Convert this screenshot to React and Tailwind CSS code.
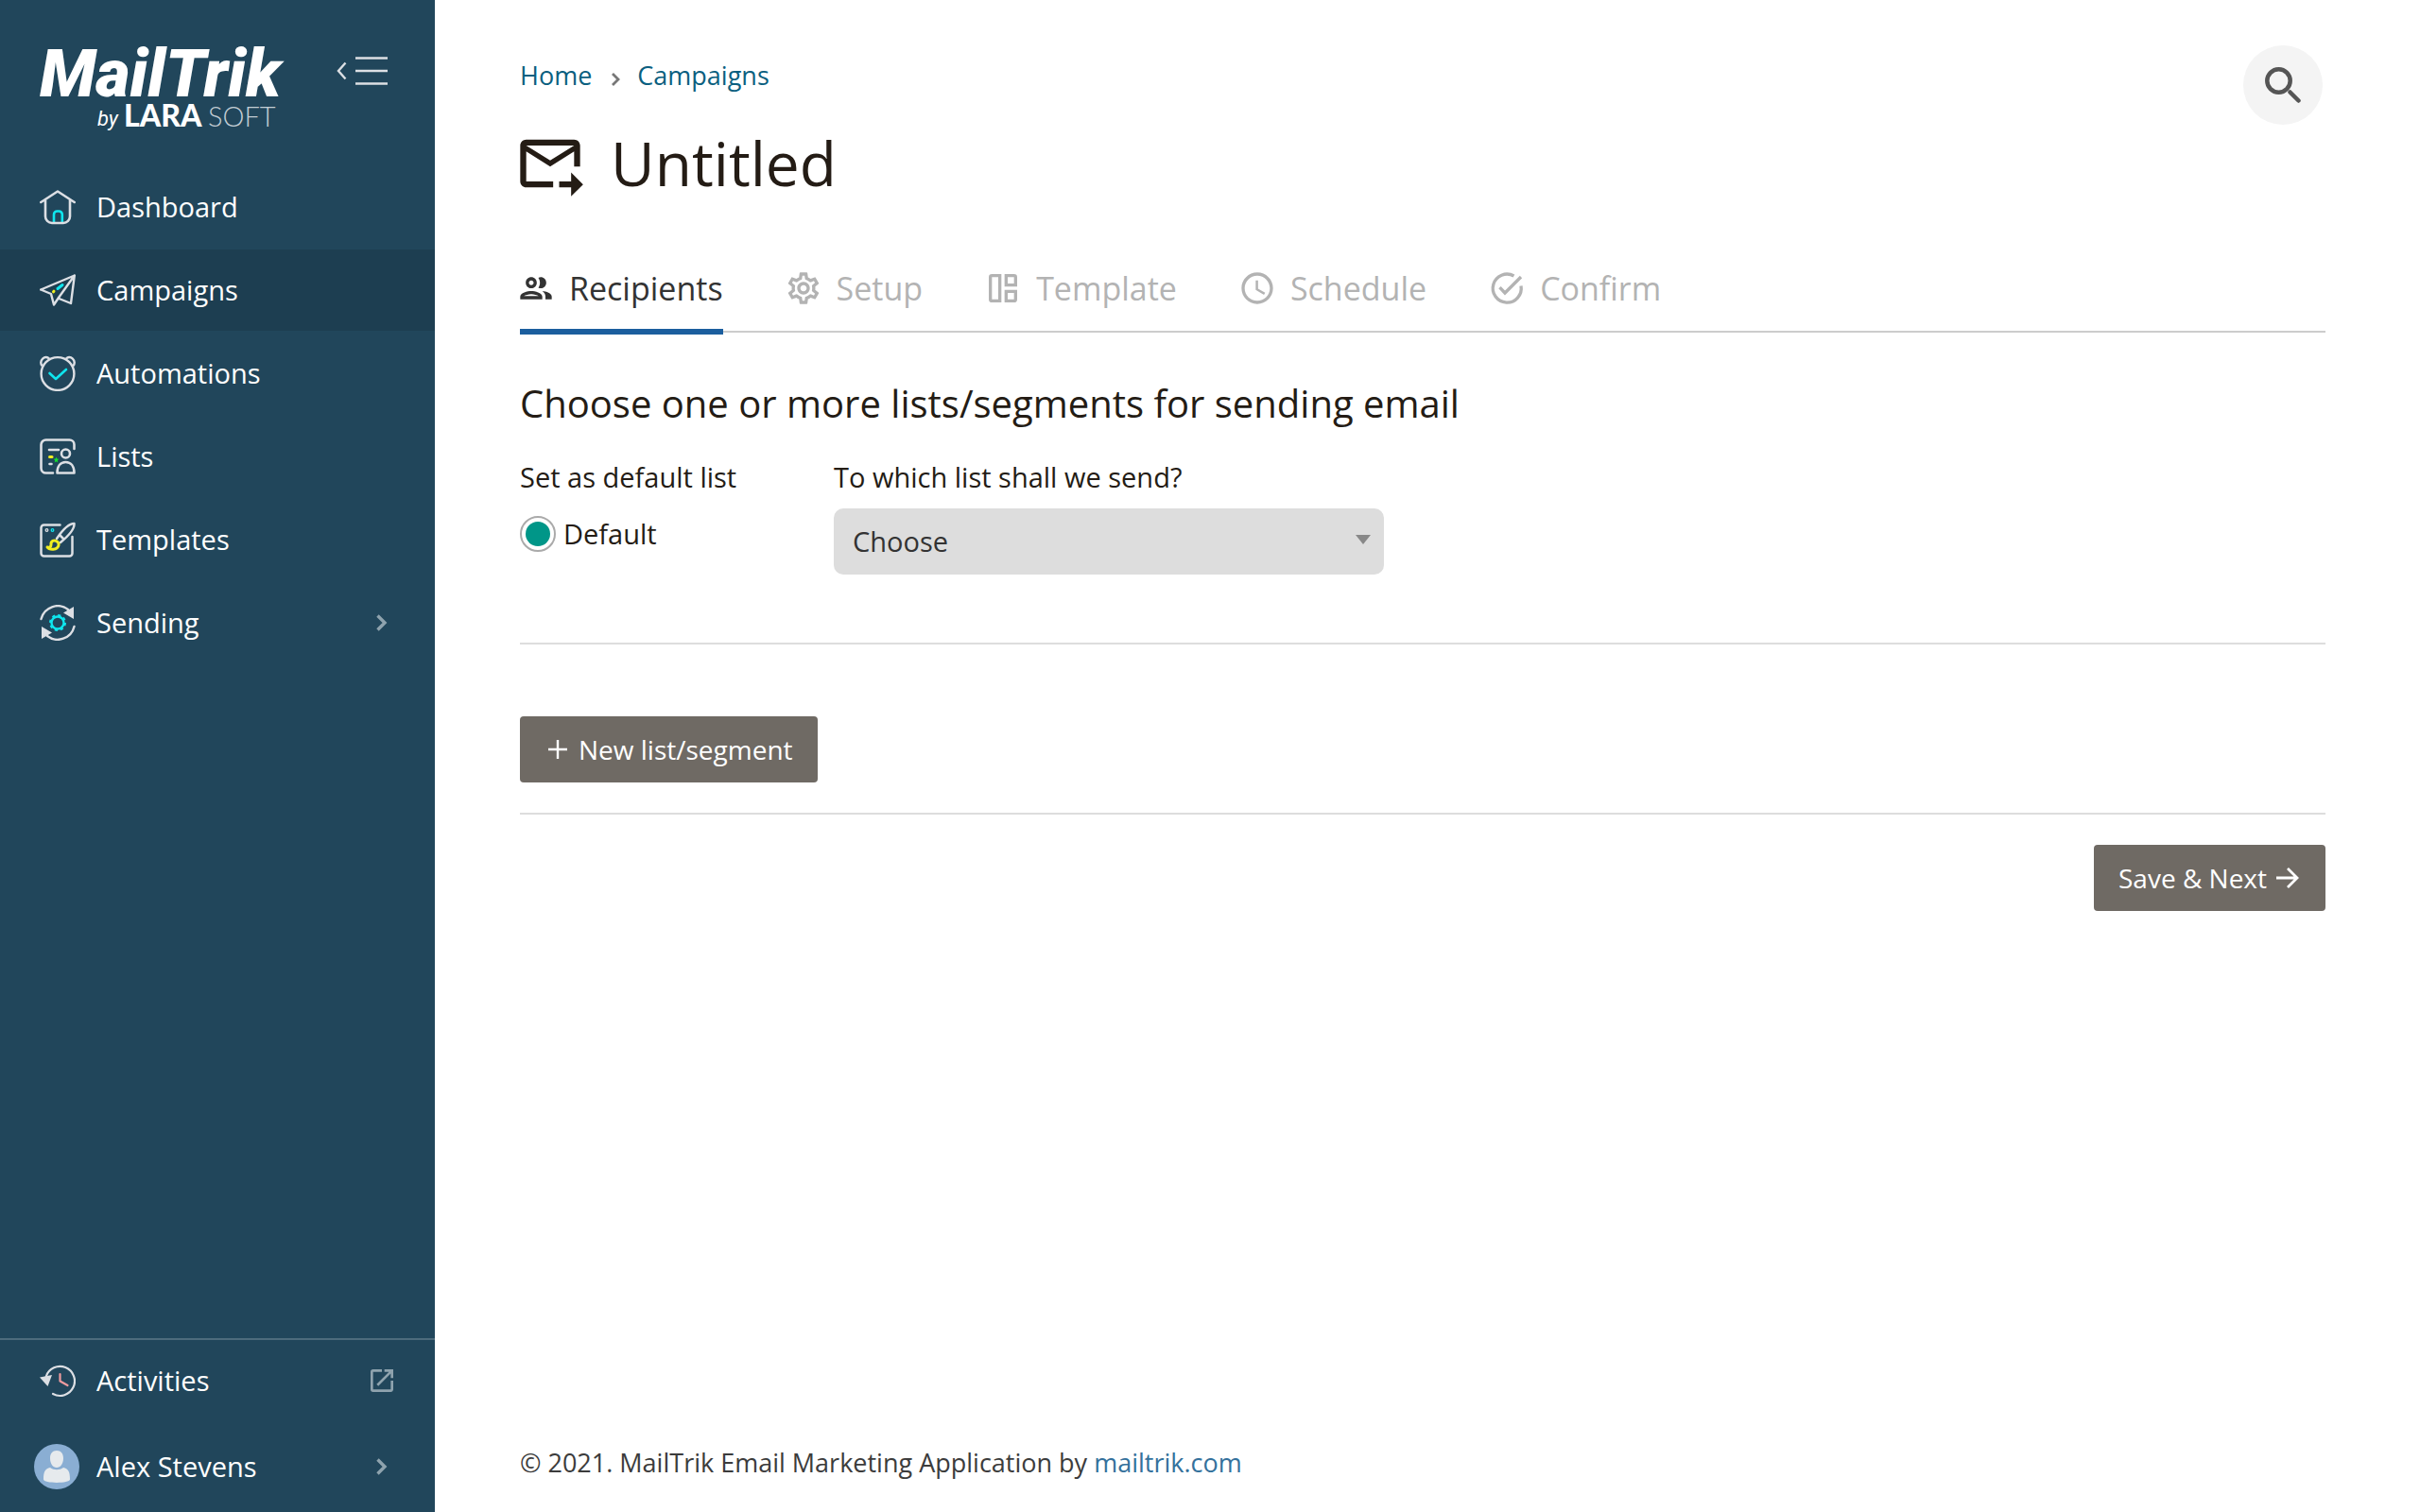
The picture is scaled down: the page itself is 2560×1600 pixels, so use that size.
import React, { useState } from "react";
import {
  MdForwardToInbox,
  MdOutlineGroup,
  MdOutlineSettings,
  MdOpenInNew,
  MdSchedule,
} from "react-icons/md";

const Logo = () => (
  <svg width="276" height="112" viewBox="-4 -8 276 112" fill="#fff">
    <text x="0" y="62" className="font-[Roboto,sans-serif] text-[70px] font-black italic">MailTrik</text>
    <text x="61" y="93" className="font-[Roboto,sans-serif] text-[22px] italic">by</text>
    <text x="89" y="94" className="font-[Lato,sans-serif] text-[32px] font-black">LARA</text>
    <text x="178" y="94" className="font-[Lato,sans-serif] text-[29px] font-light" fill="#c3cdd4">SOFT</text>
  </svg>
);

const DashboardIcon = () => (
  <svg width="38" height="38" viewBox="0 0 38 38" fill="none" strokeWidth="2.6" strokeLinecap="round" strokeLinejoin="round">
    <path d="M15 35v-8a3.500 3.500 0 0 1 3.500-3.500h1.800a3.500 3.500 0 0 1 3.500 3.500v8" stroke="#0fe6ee" />
    <path d="M1.300 14 19 2.500 36.700 14M6 12v17a7 7 0 0 0 7 7h12a7 7 0 0 0 7-7V12" stroke="#dcdfe4" />
  </svg>
);

const CampaignsIcon = () => (
  <svg width="38" height="38" viewBox="0 0 38 38" fill="none" strokeWidth="2.400" strokeLinecap="round" strokeLinejoin="round">
    <path d="M1.200 18.500 36.800 3.500 33 33 20.500 28M1.200 18.500 12 23l3 11.500L20 27 36.800 3.500" stroke="#dcdfe4" />
    <path d="m19 17.500 5-4" stroke="#0fe6ee" strokeWidth="3" />
    <path d="m14.500 20.800.5-.6" stroke="#f0ee20" strokeWidth="3" />
  </svg>
);

const AutomationsIcon = () => (
  <svg width="38" height="38" viewBox="0 0 38 38" fill="none" strokeWidth="2.400" strokeLinecap="round" strokeLinejoin="round">
    <circle cx="19" cy="19.500" r="17.400" stroke="#dcdfe4" />
    <path d="M2 10.500C-.5 5 5 0 9.500 3M36 10.500C38.500 5 33 0 28.500 3" stroke="#dcdfe4" />
    <path d="m10.500 19 6.500 6 11-10" stroke="#0fe6ee" strokeWidth="2.600" />
  </svg>
);

const ListsIcon = () => (
  <svg width="38" height="38" viewBox="0 0 38 38" fill="none" strokeWidth="2.600" strokeLinecap="round" strokeLinejoin="round">
    <path d="M14 36.500H6.500a5 5 0 0 1-5-5v-25a5 5 0 0 1 5-5h25a5 5 0 0 1 5 5V11" stroke="#dcdfe4" />
    <circle cx="27.500" cy="16" r="4.500" stroke="#dcdfe4" />
    <path d="M18.500 36.500c0-7 3.500-11.500 9-11.500s9 4.500 9 11.500zM10 12h10M10.500 27h2" stroke="#dcdfe4" />
    <path d="M10.500 19.500h2.500" stroke="#f0ee20" strokeWidth="3" />
    <path d="m17.500 19.500.8 2 2 .2-1.500 1.500.5 2.200-1.800-1.200-1.800 1.200.5-2.200-1.500-1.500 2-.2z" fill="#12e02c" />
  </svg>
);

const TemplatesIcon = () => (
  <svg width="38" height="38" viewBox="0 0 38 38" fill="none" strokeWidth="2.500" strokeLinecap="round" strokeLinejoin="round">
    <path d="M21.500 3.500h-17a3 3 0 0 0-3 3v27a3 3 0 0 0 3 3h27a3 3 0 0 0 3-3V16" stroke="#dcdfe4" />
    <path d="M18 18C24 9 31 2 36.500 2c.5 6-6 13-14.500 20M21.500 14.500l4 4" stroke="#dcdfe4" />
    <path d="M19 21.500c-4-3-7.500-1-7 3 0 2-1.500 3-4 2.500 2 3 11 3.500 12-2 .3-1.500 0-2.500-1-3.500z" stroke="#f0ee20" strokeWidth="3" />
    <circle cx="7.500" cy="9" r="1.300" stroke="#dcdfe4" strokeWidth="1.300" />
    <circle cx="13.500" cy="9" r="1.300" stroke="#0fe6ee" strokeWidth="1.300" />
  </svg>
);

const SendingIcon = () => (
  <svg width="38" height="38" viewBox="0 0 38 38" fill="none" strokeWidth="2.400" strokeLinecap="round">
    <path d="M1.500 15A18 18 0 0 1 30 5M36.500 23A18 18 0 0 1 8 33" stroke="#dcdfe4" />
    <path d="M36 2v13L25 8.500zM2 36V23l11 6.500z" fill="#dcdfe4" />
    <circle cx="19" cy="19" r="6.500" stroke="#0fe6ee" strokeWidth="2.400" />
    <circle cx="19" cy="19" r="8" stroke="#0fe6ee" strokeWidth="2" strokeDasharray="3.140 3.140" strokeLinecap="butt" />
  </svg>
);

const ActivitiesIcon = () => (
  <svg width="38" height="38" viewBox="0 0 38 38" fill="none" strokeWidth="2.200" strokeLinecap="round" strokeLinejoin="round">
    <path d="M6.800 14.500A15.500 15.500 0 1 1 14 33" stroke="#dcdfe4" />
    <path d="m0 15.500 13-2.500-4.500 12z" fill="#dcdfe4" />
    <path d="M21.500 12v7.500l8 4.500" stroke="#ee9b9f" />
  </svg>
);

const TemplateTabIcon = () => (
  <svg width="40" height="40" viewBox="0 0 24 24" fill="none" stroke="currentColor" strokeWidth="2">
    <path d="M10 4H5a1 1 0 0 0-1 1v14a1 1 0 0 0 1 1h5zM14 4h5a1 1 0 0 1 1 1v5h-6zM14 14h6v5a1 1 0 0 1-1 1h-5z" />
  </svg>
);

const ConfirmTabIcon = () => (
  <svg width="40" height="40" viewBox="0 0 24 24" fill="none" stroke="currentColor" strokeWidth="2">
    <path d="M16.500 4.200A9 9 0 1 0 21 10.500M7.500 11.500l3.300 3.500L21 4.800" />
  </svg>
);

const Chevron = () => (
  <svg width="12" height="18" viewBox="0 0 12 18" fill="none" stroke="#8fa3ae" strokeWidth="3.400">
    <path d="m1.500 1.500 7.500 7.500-7.500 7.500" />
  </svg>
);

const menu = [
  { name: "Dashboard", Icon: DashboardIcon },
  { name: "Campaigns", Icon: CampaignsIcon },
  { name: "Automations", Icon: AutomationsIcon },
  { name: "Lists", Icon: ListsIcon },
  { name: "Templates", Icon: TemplatesIcon },
  { name: "Sending", Icon: SendingIcon, sub: true },
];

const steps = [
  { name: "Recipients", Icon: MdOutlineGroup },
  { name: "Setup", Icon: MdOutlineSettings },
  { name: "Template", Icon: TemplateTabIcon },
  { name: "Schedule", Icon: MdSchedule },
  { name: "Confirm", Icon: ConfirmTabIcon },
];

const Sidebar = () => {
  return (
    <aside className="flex w-[460px] shrink-0 flex-col bg-[#21465b] text-white">
      <header className="flex h-44 items-start justify-between pt-8 pr-[50px] pl-[38px]">
        <a href="#home">
          <Logo />
        </a>
        <button type="button" aria-label="Collapse menu" className="mt-7">
          <svg width="54" height="30" viewBox="0 0 54 30" fill="none" stroke="#dcdfe4" strokeWidth="2.400">
            <path d="m9.500 6.500-7.500 8.500 7.500 8.500M20 1.500h34M20 15h34M20 28.500h34" />
          </svg>
        </button>
      </header>

      <nav className="flex flex-col gap-0.5">
        {menu.map(({ name, Icon, sub }) => (
          <a
            key={name}
            href={`#${name.toLowerCase()}`}
            className={`flex h-[86px] items-center gap-[22px] pr-[50px] pl-[42px] ${
              name === "Campaigns" ? "bg-[#1d3e51]" : ""
            }`}
          >
            <Icon />
            <span className="grow">{name}</span>
            {sub && <Chevron />}
          </a>
        ))}
      </nav>

      <div className="mt-auto border-t-2 border-[#4d6b7c]">
        <a href="#activities" className="flex h-[86px] items-center gap-[22px] pr-10 pl-[42px]">
          <ActivitiesIcon />
          <span className="grow">Activities</span>
          <MdOpenInNew size={32} color="#8fa3ae" />
        </a>
        <a href="#account" className="flex h-24 items-center gap-[18px] pr-[50px] pl-9">
          <svg width="48" height="48" viewBox="0 0 48 48">
            <circle cx="24" cy="24" r="24" fill="#8aaed3" />
            <path d="M24 7c-4.500 0-7 3-7 8 0 6 3 10 7 10s7-4 7-10c0-5-2.500-8-7-8zM17 25c-5 1-7 4-7 12.500C10 42 38 42 38 37.500 38 29 36 26 31 25c-4 3-10 3-14 0z" fill="#e6eaed" />
          </svg>
          <span className="grow">Alex Stevens</span>
          <Chevron />
        </a>
      </div>
    </aside>
  );
};

const App = () => {
  const [list, setList] = useState("");

  return (
    <div className="flex min-h-screen bg-white font-['Open_Sans',sans-serif] text-[29px] leading-10 text-[#241c15]">
      <Sidebar />

      <main className="flex grow flex-col pr-[100px] pl-[90px]">
        <div className="flex items-start justify-between pt-12">
          <div className="pt-3">
            <nav className="flex items-center text-[27px] text-[#0b5f80]">
              <a href="#home">Home</a>
              <svg className="mr-[18px] ml-5" width="10" height="24" viewBox="0 0 10 24" fill="none" stroke="#777" strokeWidth="2.800">
                <path d="m2 10 6 6-6 6" />
              </svg>
              <a href="#campaigns">Campaigns</a>
            </nav>
            <h1 className="mt-[35px] flex items-center gap-[26px] text-[64px] leading-[76px]">
              <MdForwardToInbox size={76} className="-ml-1.5" />
              Untitled
            </h1>
          </div>
          <button
            type="button"
            aria-label="Search"
            className="mr-[3px] flex size-[84px] items-center justify-center rounded-full bg-[#f4f4f4]"
          >
            <svg width="38" height="38" viewBox="0 0 38 38" fill="none" stroke="#555" strokeWidth="4.500" strokeLinecap="round">
              <circle cx="14.500" cy="14.500" r="12.200" />
              <path d="m26.500 26.500 9 9" />
            </svg>
          </button>
        </div>

        <nav className="mt-[70px] flex gap-[68px] border-b-2 border-[#ccc] text-[34px] leading-[48px]">
          {steps.map(({ name, Icon }) => (
            <a
              key={name}
              href={`#${name.toLowerCase()}`}
              className={`-mb-1 flex items-center gap-[15px] border-b-6 pb-[19px] ${
                name === "Recipients"
                  ? "border-[#1b5e9e] text-[#333]"
                  : "border-transparent text-[#b3b3b3]"
              }`}
            >
              <span className="-ml-[3px]">
                <Icon size={40} />
              </span>
              {name}
            </a>
          ))}
        </nav>

        <h2 className="mt-[47px] text-[40px] leading-[56px]">
          Choose one or more lists/segments for sending email
        </h2>

        <div className="mt-[30px] flex border-b-2 border-[#ddd] pb-[72px]">
          <fieldset className="w-[332px]">
            <legend>Set as default list</legend>
            <label className="mt-5 flex items-center gap-2">
              <input
                type="radio"
                name="default"
                defaultChecked
                className="size-[38px] appearance-none rounded-full border-2 border-[#aaa] bg-white bg-clip-content p-1 checked:bg-[#009688]"
              />
              Default
            </label>
          </fieldset>
          <div>
            <label htmlFor="list">To which list shall we send?</label>
            <div className="relative mt-[13px] w-[582px]">
              <select
                id="list"
                value={list}
                onChange={(e) => setList(e.target.value)}
                className="h-[70px] w-full appearance-none rounded-[10px] bg-[#ddd] px-5 text-[#333]"
              >
                <option value="">Choose</option>
              </select>
              <svg className="pointer-events-none absolute top-7 right-3.5" width="16" height="10" viewBox="0 0 16 10">
                <path d="M0 0h16L8 10z" fill="#888" />
              </svg>
            </div>
          </div>
        </div>

        <div className="border-b-2 border-[#ddd] pt-[76px] pb-8">
          <button type="button" className="flex h-[70px] items-center gap-3 rounded bg-[#6f6a64] pr-[26px] pl-[30px] text-[28px] text-white">
            <svg width="20" height="20" viewBox="0 0 20 20" stroke="currentColor" strokeWidth="2.400">
              <path d="M0 10h20M10 0v20" />
            </svg>
            New list/segment
          </button>
        </div>

        <button type="button" className="mt-8 flex h-[70px] items-center gap-2.5 self-end rounded bg-[#6f6a64] pr-7 pl-[26px] text-[28px] text-white">
          Save & Next
          <svg width="24" height="22" viewBox="0 0 24 22" fill="none" stroke="currentColor" strokeWidth="2.800">
            <path d="M0 11h21M12 1l10 10-10 10" />
          </svg>
        </button>

        <footer className="mt-auto pb-8 text-[27px] text-[#3c3c3c]">
          © 2021. MailTrik Email Marketing Application by{" "}
          <a href="#mailtrik" className="text-[#34719c]">mailtrik.com</a>
        </footer>
      </main>
    </div>
  );
};

export default App;
